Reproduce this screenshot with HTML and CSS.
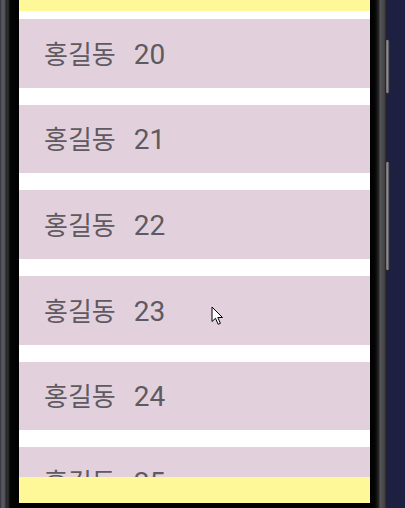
FILE: index.html
```html
<!DOCTYPE html>
<html lang="ko">
<head>
<meta charset="utf-8">
<link rel="stylesheet" href="styles.css">
</head>
<body>
<div class="device">
  <div class="bezel-left"></div>
  <div class="screen-col">
    <div class="screen">
      <div class="bar-top"></div>
      <div class="list">
        <div class="row"><div class="label"><span class="name">홍길동</span><span class="num">20</span></div></div>
        <div class="row"><div class="label"><span class="name">홍길동</span><span class="num">21</span></div></div>
        <div class="row"><div class="label"><span class="name">홍길동</span><span class="num">22</span></div></div>
        <div class="row"><div class="label"><span class="name">홍길동</span><span class="num">23</span></div></div>
        <div class="row"><div class="label"><span class="name">홍길동</span><span class="num">24</span></div></div>
        <div class="row"><div class="label"><span class="name">홍길동</span><span class="num">25</span></div></div>
      </div>
      <div class="bar-bottom"></div>
    </div>
    <div class="chin"></div>
  </div>
  <div class="bezel-right">
    <div class="btn btn-power"></div>
    <div class="btn btn-volume"></div>
  </div>
  <div class="desk"></div>
  <svg class="cursor" width="14" height="20" viewBox="0 0 14 20">
    <path d="M1 1 L1 15.5 L4.5 12.3 L7.2 18.3 L9.4 17.3 L6.8 11.5 L11.5 11.5 Z" fill="#fff" stroke="#000" stroke-width="1" stroke-linejoin="round"/>
  </svg>
</div>
</body>
</html>
```

FILE: styles.css
```css
html, body {
  margin: 0;
  padding: 0;
  background: #1d2040;
  overflow: hidden;
}
.device {
  position: relative;
  display: flex;
  width: 405px;
  height: 508px;
  background: #1d2040;
}
.bezel-left {
  width: 19px;
  flex: none;
  background: linear-gradient(to right, #2c2c38 0px, #4a4a54 1px, #5c5c64 3px, #4a4a52 5px, #262628 6px, #303032 8px, #1a1a1a 9px, #050505 10px, #000 19px);
}
.screen-col {
  width: 351px;
  flex: none;
  display: flex;
  flex-direction: column;
  background: #000;
}
.screen {
  height: 503px;
  display: flex;
  flex-direction: column;
  background: #fff;
  overflow: hidden;
}
.bar-top {
  height: 11px;
  flex: none;
  background: #fff899;
}
.bar-bottom {
  height: 26px;
  flex: none;
  background: #fff899;
}
.list {
  flex: 1;
  min-height: 0;
  overflow: hidden;
  display: flex;
  flex-direction: column;
  gap: 17.1px;
  padding-top: 8px;
}
.row {
  flex: none;
  height: 68.6px;
  display: flex;
  align-items: center;
  padding-left: 25px;
  background: #e2d1dd;
  color: #5f5960;
  font-family: Roboto, "Noto Sans CJK KR", sans-serif;
}
.label {
  display: flex;
  align-items: baseline;
  gap: 18px;
  line-height: 1.2;
  padding-top: 2px;
}
.name {
  font-size: 26px;
}
.num {
  font-size: 28px;
}
.chin {
  height: 5px;
  background: #000;
}
.bezel-right {
  position: relative;
  width: 17px;
  flex: none;
  background: linear-gradient(to right, #000 0px, #050505 5px, #151515 7px, #2a2a2a 9px, #555558 10px, #4a4a4c 13px, #3c3c3e 15px, #252528 16px, #1d2040 17px);
}
.btn {
  position: absolute;
  left: 15px;
  width: 5px;
  border-radius: 2px;
  background: linear-gradient(to right, #6a6a6c, #8a8a8c 50%, #4a4a4c);
  border: 1px solid #2a2a2c;
  box-sizing: border-box;
}
.btn-power {
  top: 39px;
  height: 55px;
}
.btn-volume {
  top: 161px;
  height: 110px;
}
.desk {
  flex: 1;
  background: #1d2040;
}
.cursor {
  position: absolute;
  left: 211px;
  top: 306px;
}
```
